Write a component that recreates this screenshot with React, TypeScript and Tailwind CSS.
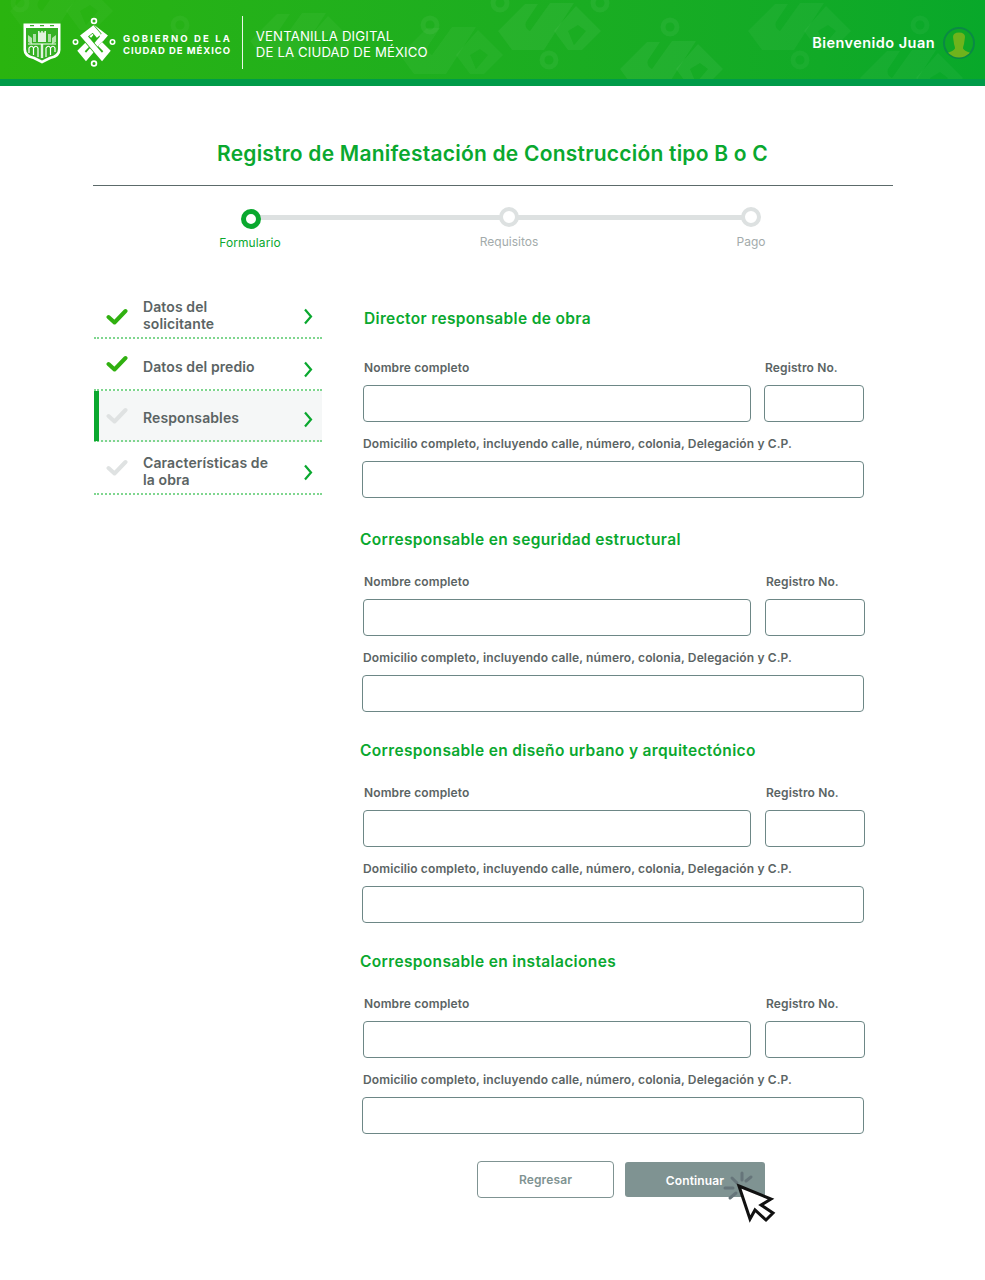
const font = "font-['Inter','Liberation_Sans',sans-serif]";

const Pattern = ({ x, y, o = 0.05 }: { x: number; y: number; o?: number }) => (
  <g transform={`translate(${x} ${y})`} fill="#ffffff" fillOpacity={o}>
    <path d="M0 33 L27 6 L40 6 L28 24 Q26 30 32 33 L52 5 L76 5 L46 52 L14 52 Z" />
    <path d="M56 33 L78 8 L103 33 L84 52 L72 52 L88 33 L80 27 L70 33 L78 52 L70 52 Z" />
  </g>
);

const rings = [
  [20, 3, 0.03],
  [180, 25, 0.04],
  [430, 25, 0.05],
  [500, 3, 0.05],
  [549, 60, 0.05],
  [600, 3, 0.05],
  [670, 27, 0.05],
  [800, 60, 0.04],
  [920, 25, 0.04],
];

const HeaderBg = () => (
  <svg className="absolute inset-0 w-full h-full" viewBox="0 0 985 79" preserveAspectRatio="none">
    <Pattern x={10} y={-22} o={0.03} />
    <Pattern x={250} y={8} o={0.04} />
    <Pattern x={400} y={22} o={0.04} />
    <Pattern x={498} y={-2} o={0.05} />
    <Pattern x={620} y={36} o={0.05} />
    <Pattern x={748} y={-2} o={0.04} />
    <Pattern x={860} y={45} o={0.04} />
    {rings.map(([cx, cy, o]) => (
      <circle key={cx} cx={cx} cy={cy} r="7" fill="none" stroke="#ffffff" strokeOpacity={o} strokeWidth="5" />
    ))}
  </svg>
);

const Shield = () => (
  <svg width="38" height="41" viewBox="0 0 38 41" className="shrink-0">
    <path d="M0.5 0.5 H37.5 V27 Q37.5 34 28 36 L19 40.5 L10 36 Q0.5 34 0.5 27 Z" fill="#ffffff" />
    <path d="M3 5 H35 V26 Q35 32 26.5 33.8 L19 37.4 L11.5 33.8 Q3 32 3 26 Z" fill="#35b024" />
    <path d="M7 2.7 h4 M17 2.7 h4 M27 2.7 h4" stroke="#35b024" strokeWidth="1.3" />
    <path d="M15 8 h1.6 v1.5 h1.6 v-1.5 h1.6 v1.5 h1.6 v-1.5 h1.6 v11 H15 Z" fill="#ffffff" fillOpacity="0.85" />
    <path d="M10 11 h3 v8 h-3 Z M25 11 h3 v8 h-3 Z" fill="#ffffff" fillOpacity="0.6" />
    <path d="M5 12 l4 3 v6 l-4 -2 Z M33 12 l-4 3 v6 l4 -2 Z" fill="#d7f2d1" fillOpacity="0.8" />
    <path
      d="M5 21 H33 M6 30 V25 q2.5 -3.5 4.5 0 V32 M10.5 25 q2.5 -3.5 4.5 0 V34 M23 34 V25 q2.5 -3.5 4.5 0 V32 M27.5 25 q2.5 -3.5 4.5 0 V29"
      fill="none"
      stroke="#ffffff"
      strokeWidth="1.2"
    />
    <path d="M19 21 V35" stroke="#ffffff" strokeWidth="2.4" strokeOpacity="0.85" />
  </svg>
);

const knotA = "M27 19 L21 12 L12 19 L30 40 L35 34 L28 27";
const knotB = "M17 19 L23 12 L32 19 L14 40 L9 34 L16 27";

const CdmxLogo = () => (
  <svg width="44" height="50" viewBox="0 0 44 50" className="shrink-0">
    <g fill="none" stroke="#ffffff">
      <circle cx="22" cy="4" r="2.4" strokeWidth="1.7" />
      <circle cx="22" cy="46.5" r="2.4" strokeWidth="1.7" />
      <circle cx="3.5" cy="25" r="2.2" strokeWidth="1.6" />
      <circle cx="40.5" cy="25" r="2.2" strokeWidth="1.6" />
    </g>
    <g fill="none" strokeLinejoin="miter">
      <path d={knotB} stroke="#ffffff" strokeWidth="5.5" />
      <path d={knotA} stroke="#2db217" strokeWidth="7" />
      <path d={knotA} stroke="#ffffff" strokeWidth="5.5" />
    </g>
  </svg>
);

const UserAvatar = () => (
  <svg width="32" height="32" viewBox="0 0 32 32" className="shrink-0">
    <defs>
      <clipPath id="avatar">
        <circle cx="16" cy="16" r="14.5" />
      </clipPath>
    </defs>
    <circle cx="16" cy="16" r="15" fill="#0fa826" stroke="#0a8a45" strokeWidth="2" />
    <g clipPath="url(#avatar)" fill="#6fb31c">
      <path d="M10 10 Q10 5.5 16 5.5 Q22 5.5 22 10 L21 17 Q20 20 20 21.5 Q21.5 24 28 26 L28 32 H4 L4 26 Q10.5 24 12 21.5 Q12 20 11 17 Z" />
    </g>
  </svg>
);

const Check = ({ on }: { on: boolean }) => (
  <svg width="22" height="18" viewBox="0 0 22 18" className="shrink-0">
    <path
      d="M2.5 9 L8.5 14.5 L19.5 3"
      fill="none"
      stroke={on ? "#30b010" : "#dfe2e2"}
      strokeWidth="4"
      strokeLinecap="round"
      strokeLinejoin="round"
    />
  </svg>
);

const Chevron = ({ className }: { className: string }) => (
  <svg width="10" height="17" viewBox="0 0 10 17" className={`shrink-0 mr-[9px] ${className}`}>
    <path d="M2 1.5 L8 8.5 L2 15.5" fill="none" stroke="#0aa82f" strokeWidth="2.2" />
  </svg>
);

const menu = [
  { label: "Datos del\nsolicitante", done: true, h: "h-[49px]", icon: "translate-y-[3px]", text: "translate-y-[1px]", chev: "translate-y-[3px]" },
  { label: "Datos del predio", done: true, h: "h-[52px]", icon: "", text: "translate-y-[2px]", chev: "translate-y-[5px]" },
  { label: "Responsables", done: false, active: true, h: "h-[51px]", icon: "", text: "translate-y-[2px]", chev: "translate-y-[4px]" },
  { label: "Características de\nla obra", done: false, h: "h-[53px]", icon: "", text: "translate-y-[3px]", chev: "translate-y-[5px]" },
];

const Sidebar = () => (
  <div className="w-[228px] ml-[94px] mt-[1px] shrink-0">
    {menu.map((m) => (
      <div
        key={m.label}
        className={`relative flex items-center ${m.h} border-b-2 border-dotted border-[#7fd68f] ${
          m.active ? "bg-[#f5f7f7]" : ""
        }`}
      >
        {m.active && <div className="absolute left-0 top-0 bottom-[-1px] w-[5px] bg-[#0aa82f]" />}
        <div className={`ml-[12px] w-[37px] ${m.icon}`}>
          <Check on={m.done} />
        </div>
        <div className={`flex-1 whitespace-pre-line text-[14px] leading-[17px] font-semibold tracking-[0.1px] text-[#5b6464] ${m.text}`}>
          {m.label}
        </div>
        <Chevron className={m.chev} />
      </div>
    ))}
  </div>
);

const fieldCls = "block h-[37px] rounded-[4px] border border-[#6d8786] bg-white";
const labelCls = "text-[12px] leading-[15px] font-semibold tracking-[0.12px] text-[#5b6464]";

const Section = ({
  title,
  titleLeft,
  regLeft,
  first,
}: {
  title: string;
  titleLeft: string;
  regLeft: string;
  first?: boolean;
}) => (
  <section className={first ? "h-[221px]" : "h-[211px]"}>
    <h2 className={`text-[15.5px] leading-[20px] font-semibold tracking-[0.35px] text-[#0aa82f] ${titleLeft}`}>{title}</h2>
    <div className={`flex ${first ? "mt-[31px]" : "mt-[24px]"}`}>
      <div className="w-[388px] ml-[3px]">
        <div className={`${labelCls} ml-[1px]`}>Nombre completo</div>
        <input className={`${fieldCls} w-[388px] mt-[10px]`} />
      </div>
      <div className={`${regLeft} w-[100px]`}>
        <div className={`${labelCls} ml-[1px]`}>Registro No.</div>
        <input className={`${fieldCls} w-[100px] mt-[10px]`} />
      </div>
    </div>
    <div className={`${labelCls} ml-[3px] mt-[14px]`}>
      Domicilio completo, incluyendo calle, número, colonia, Delegación y C.P.
    </div>
    <input className={`${fieldCls} w-[502px] ml-[2px] mt-[10px]`} />
  </section>
);

const Step = ({ label, active, pos }: { label: string; active?: boolean; pos: string }) => (
  <div className={`absolute top-0 ${pos} w-[100px] -translate-x-1/2 flex flex-col items-center`}>
    <div
      className={`rounded-full bg-white w-[20px] h-[20px] ${
        active ? "border-[5px] border-[#0aa82f] mt-[2px] ml-[2px]" : "border-[4px] border-[#dde1e1]"
      }`}
    />
    <div className={`text-[12px] leading-[15px] ${active ? "text-[#0aa82f] mt-[6px] tracking-[0.1px]" : "text-[#a3abab] mt-[7px]"}`}>
      {label}
    </div>
  </div>
);

export default function App() {
  return (
    <div className={`${font} w-[985px] h-[1280px] bg-white overflow-hidden`}>
      <header className="relative h-[86px] border-b-[7px] border-[#009b48] bg-gradient-to-r from-[#2ab40f] to-[#08a82a] text-white">
        <HeaderBg />
        <div className="relative flex items-center h-full pt-[8px] pl-[23px] pr-[10px]">
          <Shield />
          <div className="ml-[11px] -mt-[3px]">
            <CdmxLogo />
          </div>
          <div className="ml-[7px] text-[9.5px] leading-[12.5px] font-bold tracking-[0.1em] whitespace-nowrap mt-[3px]">
            <span className="tracking-[0.22em]">GOBIERNO DE LA</span>
            <br />
            CIUDAD DE MÉXICO
          </div>
          <div className="ml-[10px] h-[53px] w-px bg-white/90 -mt-[2px]" />
          <div className="ml-[13px] text-[13.2px] leading-[16px] tracking-[0.01em] whitespace-nowrap">
            VENTANILLA DIGITAL
            <br />
            DE LA CIUDAD DE MÉXICO
          </div>
          <div className="ml-auto flex items-center gap-[8px] -mt-[1px]">
            <span className="text-[14.5px] font-semibold tracking-[0.45px]">Bienvenido Juan</span>
            <UserAvatar />
          </div>
        </div>
      </header>

      <h1 className="mt-[55px] text-center text-[21px] leading-[26px] font-semibold tracking-[0.22px] text-[#0aa82f]">
        Registro de Manifestación de Construcción tipo B o C
      </h1>
      <div className="ml-[93px] w-[800px] mt-[18px] h-px bg-[#5c6a6a]" />

      <div className="relative mt-[21px] h-[82px]">
        <div className="absolute left-[251px] top-[8px] w-[500px] h-[5px] bg-[#dde1e1]" />
        <Step label="Formulario" active pos="left-[250px]" />
        <Step label="Requisitos" pos="left-[509px]" />
        <Step label="Pago" pos="left-[751px]" />
      </div>

      <div className="flex">
        <Sidebar />
        <div className="ml-[38px] mt-[20px] w-[520px]">
          <Section first title="Director responsable de obra" titleLeft="ml-[4px]" regLeft="ml-[13px]" />
          <Section title="Corresponsable en seguridad estructural" titleLeft="" regLeft="ml-[14px]" />
          <Section title="Corresponsable en diseño urbano y arquitectónico" titleLeft="" regLeft="ml-[14px]" />
          <Section title="Corresponsable en instalaciones" titleLeft="" regLeft="ml-[14px]" />
          <div className="flex items-center ml-[117px] gap-[11px] mt-[-2px]">
            <button className="w-[137px] h-[37px] rounded-[4px] border border-[#7f9392] text-[12px] font-semibold tracking-[0.12px] text-[#7f9392]">
              Regresar
            </button>
            <div className="relative">
              <button className="block w-[140px] h-[35px] pt-[2px] rounded-[3px] bg-[#7f9392] text-[12px] font-semibold tracking-[0.12px] text-white">
                Continuar
              </button>
              <svg width="60" height="60" viewBox="0 0 60 60" className="absolute left-[95px] top-[5px]">
                <g stroke="#66757a" strokeWidth="3" strokeLinecap="round">
                  <path d="M22 6 V13 M31 10 L26 14 M5 21 H13 M12 11 L17 16 M10 31 L16 26" />
                </g>
                <path
                  d="M19 19 L51 32 L41 38 L53 46 L46 53 L35 43 L30 52 Z"
                  fill="#ffffff"
                  stroke="#111111"
                  strokeWidth="3"
                  strokeLinejoin="miter"
                />
              </svg>
            </div>
          </div>
        </div>
      </div>
    </div>
  );
}
